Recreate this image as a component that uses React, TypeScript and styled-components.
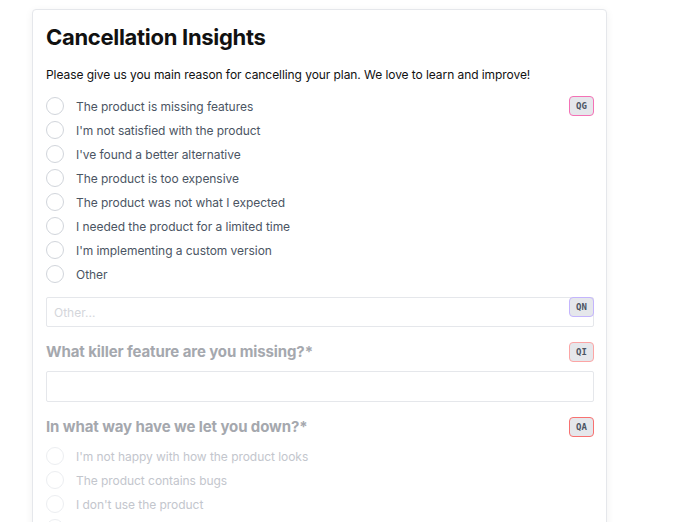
import React from "react";
import styled, { createGlobalStyle } from "styled-components";

const Global = createGlobalStyle`
  html, body { margin: 0; padding: 0; background: #ffffff; }
  body { font-family: Inter, "Noto Sans", sans-serif; -webkit-font-smoothing: antialiased; }
  * { box-sizing: border-box; }
`;

const Page = styled.div`
  padding: 9px 0 0 32px;
  height: 522px;
  overflow: hidden;
`;

const Card = styled.div`
  width: 575px;
  background: #fff;
  border: 1px solid #e5e7eb;
  border-radius: 4px;
  box-shadow: 0 2px 8px rgba(15, 23, 42, 0.06);
  padding: 0 12px 40px 13px;
  min-height: 560px;
`;

const Title = styled.h1`
  margin: 0;
  padding-top: 13px;
  font-size: 22px;
  line-height: 28px;
  font-weight: 700;
  color: #111111;
  letter-spacing: -0.3px;
`;

const Subtitle = styled.p`
  margin: 15px 0 0;
  font-size: 12px;
  line-height: 18px;
  color: #111111;
  letter-spacing: -0.07px;
`;

const Section = styled.div<{ $top?: number }>`
  position: relative;
  margin-top: ${(p) => p.$top ?? 0}px;
`;

const Badge = styled.span<{ $color: string }>`
  position: absolute;
  top: 0;
  right: 0;
  width: 25px;
  height: 20px;
  display: flex;
  align-items: center;
  justify-content: center;
  background: #e5e7eb;
  border: 1px solid ${(p) => p.$color};
  border-radius: 4px;
  font-family: "DejaVu Sans Mono", "Liberation Mono", monospace;
  font-size: 9px;
  font-weight: 700;
  color: #4b5563;
`;

const OptionList = styled.div`
  display: flex;
  flex-direction: column;
`;

const Option = styled.label<{ $faded?: boolean }>`
  display: flex;
  align-items: center;
  gap: 12px;
  height: 24px;
  font-size: 12px;
  letter-spacing: -0.05px;
  color: ${(p) => (p.$faded ? "#c3c6cd" : "#4b5563")};
`;

const Radio = styled.span<{ $faded?: boolean }>`
  width: 18px;
  height: 18px;
  border-radius: 50%;
  border: 1px solid ${(p) => (p.$faded ? "#eceef1" : "#d1d5db")};
  background: #fff;
  flex-shrink: 0;
`;

const Input = styled.div`
  height: 30px;
  border: 1px solid #e5e7eb;
  border-radius: 2px;
  padding: 0 7px;
  display: flex;
  align-items: center;
  font-size: 12px;
  color: #d4d6db;
`;

const Heading = styled.h2`
  margin: 0;
  font-size: 15px;
  line-height: 20px;
  font-weight: 700;
  color: #a5a8ae;
  letter-spacing: -0.1px;
`;

const main = [
  "The product is missing features",
  "I'm not satisfied with the product",
  "I've found a better alternative",
  "The product is too expensive",
  "The product was not what I expected",
  "I needed the product for a limited time",
  "I'm implementing a custom version",
  "Other",
];

const letdown = [
  "I'm not happy with how the product looks",
  "The product contains bugs",
  "I don't use the product",
  "The product is too slow",
];

export default function App() {
  return (
    <>
      <Global />
      <Page>
        <Card>
          <Title>Cancellation Insights</Title>
          <Subtitle>
            Please give us you main reason for cancelling your plan. We love to learn and improve!
          </Subtitle>
          <Section $top={10}>
            <Badge $color="#f472b6" style={{ top: 2 }}>QG</Badge>
            <OptionList>
              {main.map((o) => (
                <Option key={o}>
                  <Radio />
                  {o}
                </Option>
              ))}
            </OptionList>
          </Section>
          <Section $top={11}>
            <Badge $color="#c4b5fd">QN</Badge>
            <Input>Other...</Input>
          </Section>
          <Section $top={15}>
            <Badge $color="#fca5a5">QI</Badge>
            <Heading>What killer feature are you missing?*</Heading>
            <Input style={{ marginTop: 9, height: 31 }} />
          </Section>
          <Section $top={15}>
            <Badge $color="#f87171">QA</Badge>
            <Heading>In what way have we let you down?*</Heading>
            <OptionList style={{ marginTop: 7 }}>
              {letdown.map((o) => (
                <Option key={o} $faded>
                  <Radio $faded />
                  {o}
                </Option>
              ))}
            </OptionList>
          </Section>
        </Card>
      </Page>
    </>
  );
}
